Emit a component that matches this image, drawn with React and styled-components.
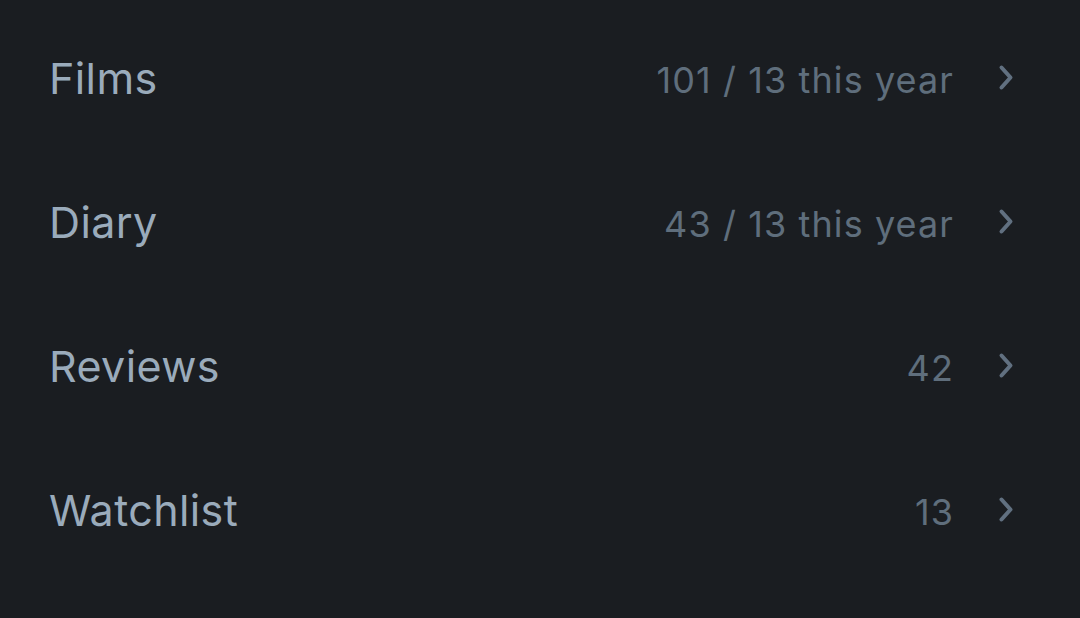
import React from "react";
import styled, { createGlobalStyle } from "styled-components";

const Global = createGlobalStyle`
  html, body { margin: 0; padding: 0; background: #1a1d21; }
  body { font-family: Inter, "Liberation Sans", sans-serif; }
`;

const List = styled.ul`
  list-style: none;
  margin: 0;
  padding: 6px 0 0 0;
  width: 1080px;
  height: 618px;
  box-sizing: border-box;
  background: #1a1d21;
`;

const Row = styled.li`
  display: flex;
  align-items: center;
  height: 144px;
  padding: 0 66px 0 49px;
`;

const Label = styled.span`
  flex: 1;
  font-size: 43px;
  font-weight: 400;
  color: #9aabbb;
  letter-spacing: 0.4px;
`;

const Value = styled.span`
  font-size: 36px;
  color: #5f6e7c;
  margin-right: 44px;
  margin-top: 4px;
  letter-spacing: 1.1px;
`;

const Chevron = styled.svg`
  width: 16px;
  height: 28px;
  color: #617080;
`;

const rows = [
  ["Films", "101 / 13 this year"],
  ["Diary", "43 / 13 this year"],
  ["Reviews", "42"],
  ["Watchlist", "13"],
];

export default function App() {
  return (
    <>
      <Global />
      <List>
        {rows.map(([l, v]) => (
          <Row key={l}>
            <Label>{l}</Label>
            <Value>{v}</Value>
            <Chevron viewBox="0 0 16 28" fill="none">
              <path d="M3.5 3.5 L12.5 13.5 L3.5 23.5" stroke="currentColor" strokeWidth="4" strokeLinecap="round" strokeLinejoin="round" />
            </Chevron>
          </Row>
        ))}
      </List>
    </>
  );
}
